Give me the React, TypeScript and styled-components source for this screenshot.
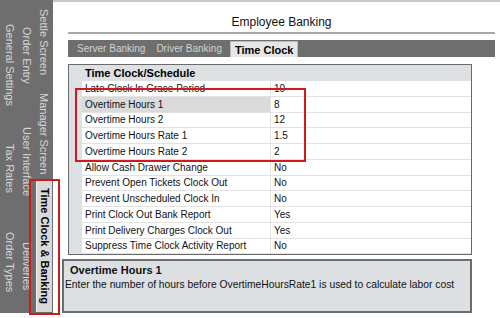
import React, {FC} from "react";
import styled, {createGlobalStyle} from "styled-components";

const GlobalStyle = createGlobalStyle`
  body {
    margin: 0;
    background: #ffffff;
    font-family: "Liberation Sans", Arial, sans-serif;
  }
`;

const Page = styled.div`
  position: relative;
  width: 500px;
  height: 318px;
  display: flex;
  align-items: flex-start;
  background: #ffffff;
  overflow: hidden;
`;

const Sidebar = styled.div`
  width: 53px;
  height: 313px;
  flex: 0 0 53px;
  display: flex;
  padding-left: 1px;
  box-sizing: border-box;
  background: #6e6e6e;
`;

const SideColumn = styled.div`
  width: 17px;
  display: flex;
  flex-direction: column;
`;

const SideTab = styled.div<{ $h: number; $mt: number; $active?: boolean }>`
  height: ${p => p.$h}px;
  margin-top: ${p => p.$mt}px;
  display: flex;
  align-items: center;
  justify-content: center;
  box-sizing: border-box;
  background: ${p => (p.$active ? "#d9d9d9" : "transparent")};
  border-left: ${p => (p.$active ? "1px solid #f2f2f2" : "none")};
  margin-left: ${p => (p.$active ? "1px" : "0")};
`;

const SideLabel = styled.span<{ $active?: boolean }>`
  writing-mode: vertical-rl;
  white-space: nowrap;
  font-size: 11px;
  line-height: 13px;
  font-weight: ${p => (p.$active ? 700 : 400)};
  color: ${p => (p.$active ? "#000000" : "#d6d6d6")};
`;

const Main = styled.div`
  flex: 1;
  height: 318px;
  display: flex;
  flex-direction: column;
  box-sizing: border-box;
  border-top: 2px solid #c6c6c6;
  padding: 0 5px 0 9px;
`;

const TitleBar = styled.div`
  height: 32px;
  margin-left: 6px;
  box-sizing: border-box;
  border-bottom: 2px solid #a8a8a8;
  display: flex;
  justify-content: center;
  padding-top: 13px;
  font-size: 12px;
  line-height: 14px;
  color: #111111;
`;

const TabStrip = styled.div`
  height: 17px;
  margin: 6px 0 0 6px;
  display: flex;
  align-items: flex-end;
  gap: 1px;
  padding-left: 4px;
  background: #6e6e6e;
`;

const Tab = styled.div<{ $active?: boolean }>`
  height: ${p => (p.$active ? "16px" : "17px")};
  padding: 0 ${p => (p.$active ? "4px" : "5px")};
  display: flex;
  align-items: center;
  box-sizing: border-box;
  font-size: ${p => (p.$active ? "11px" : "10px")};
  font-weight: ${p => (p.$active ? 700 : 400)};
  color: ${p => (p.$active ? "#000000" : "#d2d2d2")};
  background: ${p => (p.$active ? "#e6e6e6" : "transparent")};
  border: ${p => (p.$active ? "1px solid #bdbdbd" : "none")};
  border-bottom: none;
  margin-left: ${p => (p.$active ? "2px" : "0")};
`;

const Grid = styled.div`
  position: relative;
  width: 404px;
  margin: 7px 0 0 6px;
  box-sizing: border-box;
  border: 1px solid #6a6a6a;
  background: #ffffff;
`;

const GroupHeader = styled.div`
  height: 16px;
  padding-left: 16px;
  display: flex;
  align-items: center;
  background: #dee1e4;
  font-size: 11px;
  font-weight: 700;
  color: #000000;
`;

const Row = styled.div`
  height: 15.75px;
  display: grid;
  grid-template-columns: 13px 189px 1fr;
`;

const Gutter = styled.div`
  background: #dee1e4;
`;

const Cell = styled.div<{ $selected?: boolean; $divider?: boolean }>`
  display: flex;
  align-items: center;
  padding-left: 3px;
  box-sizing: border-box;
  border-bottom: 1px solid #e2e2e2;
  border-right: ${p => (p.$divider ? "1px solid #e2e2e2" : "none")};
  background: ${p => (p.$selected ? "#dadada" : "#ffffff")};
  font-size: 10px;
  color: #111111;
  white-space: nowrap;
  overflow: hidden;
`;

const Highlight = styled.div`
  position: absolute;
  box-sizing: border-box;
  border: 2px solid #d0191c;
  pointer-events: none;
`;

const RowsMark = styled(Highlight)`
  left: 6px;
  top: 23px;
  width: 231px;
  height: 74px;
`;

const TabMark = styled(Highlight)`
  left: 29px;
  top: 179px;
  width: 31px;
  height: 136px;
`;

const Description = styled.div`
  width: 410px;
  height: 54px;
  margin-top: 4px;
  box-sizing: border-box;
  border: 2px solid #6c6c6c;
  background: #dde0e3;
  color: #111111;
`;

const DescTitle = styled.div`
  padding: 2px 0 0 6px;
  font-size: 11px;
  line-height: 14px;
  font-weight: 700;
`;

const DescText = styled.div`
  padding: 1px 0 0 1px;
  font-size: 10.3px;
  line-height: 14px;
`;

type SideItem = { label: string; h: number; mt: number; active?: boolean };

const sideColumns: SideItem[][] = [
  [
    { label: "General Settings", h: 105, mt: 12 },
    { label: "Tax Rates", h: 67, mt: 18 },
    { label: "Order Types", h: 85, mt: 18 },
  ],
  [
    { label: "Order Entry", h: 80, mt: 15 },
    { label: "User Interface", h: 93, mt: 20 },
    { label: "Deliveries", h: 73, mt: 22 },
  ],
  [
    { label: "Settle Screen", h: 81, mt: 2 },
    { label: "Manager Screen", h: 88, mt: 7 },
    { label: "Time Clock & Banking", h: 132, mt: 2, active: true },
  ],
];

const rows: [string, string][] = [
  ["Late Clock In Grace Period", "10"],
  ["Overtime Hours 1", "8"],
  ["Overtime Hours 2", "12"],
  ["Overtime Hours Rate 1", "1.5"],
  ["Overtime Hours Rate 2", "2"],
  ["Allow Cash Drawer Change", "No"],
  ["Prevent Open Tickets Clock Out", "No"],
  ["Prevent Unscheduled Clock In", "No"],
  ["Print Clock Out Bank Report", "Yes"],
  ["Print Delivery Charges Clock Out", "Yes"],
  ["Suppress Time Clock Activity Report", "No"],
];

const SideNav: FC = () => (
  <Sidebar>
    {sideColumns.map((col, i) => (
      <SideColumn key={i}>
        {col.map(t => (
          <SideTab key={t.label} $h={t.h} $mt={t.mt} $active={t.active}>
            <SideLabel $active={t.active}>{t.label}</SideLabel>
          </SideTab>
        ))}
      </SideColumn>
    ))}
  </Sidebar>
);

const App: FC = () => {
  return (
    <Page>
      <GlobalStyle />
      <SideNav />
      <Main>
        <TitleBar>Employee Banking</TitleBar>
        <TabStrip>
          <Tab>Server Banking</Tab>
          <Tab>Driver Banking</Tab>
          <Tab $active>Time Clock</Tab>
        </TabStrip>
        <Grid>
          <GroupHeader>Time Clock/Schedule</GroupHeader>
          {rows.map(([label, value], i) => (
            <Row key={label}>
              <Gutter />
              <Cell $divider $selected={i === 1}>{label}</Cell>
              <Cell>{value}</Cell>
            </Row>
          ))}
          <RowsMark />
        </Grid>
        <Description>
          <DescTitle>Overtime Hours 1</DescTitle>
          <DescText>Enter the number of hours before OvertimeHoursRate1 is used to calculate labor cost</DescText>
        </Description>
      </Main>
      <TabMark />
    </Page>
  );
};

export default App;
